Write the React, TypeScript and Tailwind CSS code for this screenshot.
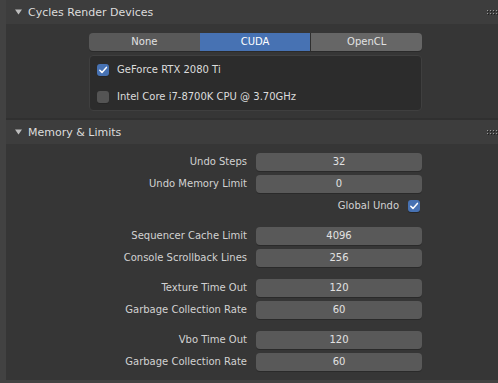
import React from "react";

function Tri() {
  return (
    <svg width="7" height="6" viewBox="0 0 7 6" className="ml-[9px] mr-[6px] shrink-0">
      <polygon points="0,0.5 7,0.5 3.5,5.5" fill="#bdbdbd" />
    </svg>
  );
}

function Grip() {
  const dots: React.ReactElement[] = [];
  for (let r = 0; r < 2; r++) {
    for (let c = 0; c < 4; c++) {
      dots.push(<rect key={`s${r}${c}`} x={c * 3 + 1} y={r * 3 + 1} width="1" height="1" fill="#1e1e1e" />);
      dots.push(<rect key={`d${r}${c}`} x={c * 3} y={r * 3} width="1" height="1" fill="#9a9a9a" />);
    }
  }
  return (
    <svg width="12" height="6" viewBox="0 0 12 6" className="absolute left-[481px] top-[10px]">
      {dots}
    </svg>
  );
}

function Header({ title }: { title: string }) {
  return (
    <div className="relative h-[24px] bg-[#3d3d3d] flex items-center text-[11px] text-[#dcdcdc]">
      <Tri />
      <span className="leading-none">{title}</span>
      <Grip />
    </div>
  );
}

function Check({ on }: { on: boolean }) {
  return (
    <div
      className={`w-[12px] h-[12px] rounded-[3px] shrink-0 flex items-center justify-center ${
        on ? "bg-[#4772b3]" : "bg-[#545454]"
      } shadow-[0_1px_0_#262626]`}
    >
      {on && (
        <svg width="10" height="10" viewBox="0 0 10 10">
          <polyline points="1.8,5.2 4,7.4 8.4,2.4" fill="none" stroke="#ffffff" strokeWidth="1.5" strokeLinecap="round" strokeLinejoin="round" />
        </svg>
      )}
    </div>
  );
}

function Row({ label, value }: { label: string; value: string }) {
  return (
    <div className="flex items-center h-[18px]">
      <div className="w-[241px] text-right text-[10px] text-[#d2d2d2] leading-none">{label}</div>
      <div className="ml-[9px] w-[166px] h-[18px] rounded-[4px] bg-[#595959] shadow-[0_1px_0_#2a2a2a] flex items-center justify-center text-[10px] text-[#e2e2e2] leading-none">
        {value}
      </div>
    </div>
  );
}

export default function App() {
  return (
    <div className="w-[498px] h-[383px] overflow-hidden bg-[#424242] font-['DejaVu_Sans',sans-serif] pl-[6px]">
      <div className="bg-[#303030]">
        <Header title="Cycles Render Devices" />
        <div className="bg-[#363636] pt-[9px] pb-[7px] pl-[83px]">
          <div className="flex w-[333px] h-[18px] text-[10px] leading-none">
            <div className="flex-1 bg-[#595959] rounded-l-[4px] flex items-center justify-center text-[#e2e2e2] shadow-[0_1px_0_#2a2a2a]">None</div>
            <div className="flex-1 bg-[#4772b3] flex items-center justify-center text-[#ffffff] border-r border-[#2f2f2f] shadow-[0_1px_0_#2a2a2a]">CUDA</div>
            <div className="flex-1 bg-[#666666] rounded-r-[4px] flex items-center justify-center text-[#e2e2e2] shadow-[0_1px_0_#2a2a2a]">OpenCL</div>
          </div>
          <div className="mt-[4px] w-[333px] h-[56px] rounded-[4px] bg-[#2c2c2c] border border-[#3f3f3f] flex flex-col">
            <div className="h-[28px] flex items-center pl-[7px] text-[10px] text-[#dcdcdc] leading-none">
              <Check on={true} />
              <span className="ml-[8px]">GeForce RTX 2080 Ti</span>
            </div>
            <div className="h-[26px] flex items-center pl-[7px] text-[10px] text-[#dcdcdc] leading-none">
              <Check on={false} />
              <span className="ml-[8px]">Intel Core i7-8700K CPU @ 3.70GHz</span>
            </div>
          </div>
        </div>
        <div className="h-[2px]" />
        <Header title="Memory & Limits" />
        <div className="bg-[#363636] pt-[9px] pb-[9px] flex flex-col">
          <div className="flex flex-col gap-[4px]">
            <Row label="Undo Steps" value="32" />
            <Row label="Undo Memory Limit" value="0" />
            <div className="flex items-center h-[18px] justify-end w-[414px]">
              <span className="text-[10px] text-[#d2d2d2] leading-none">Global Undo</span>
              <div className="ml-[9px]">
                <Check on={true} />
              </div>
            </div>
          </div>
          <div className="mt-[12px] flex flex-col gap-[4px]">
            <Row label="Sequencer Cache Limit" value="4096" />
            <Row label="Console Scrollback Lines" value="256" />
          </div>
          <div className="mt-[12px] flex flex-col gap-[4px]">
            <Row label="Texture Time Out" value="120" />
            <Row label="Garbage Collection Rate" value="60" />
          </div>
          <div className="mt-[12px] flex flex-col gap-[4px]">
            <Row label="Vbo Time Out" value="120" />
            <Row label="Garbage Collection Rate" value="60" />
          </div>
        </div>
      </div>
    </div>
  );
}
